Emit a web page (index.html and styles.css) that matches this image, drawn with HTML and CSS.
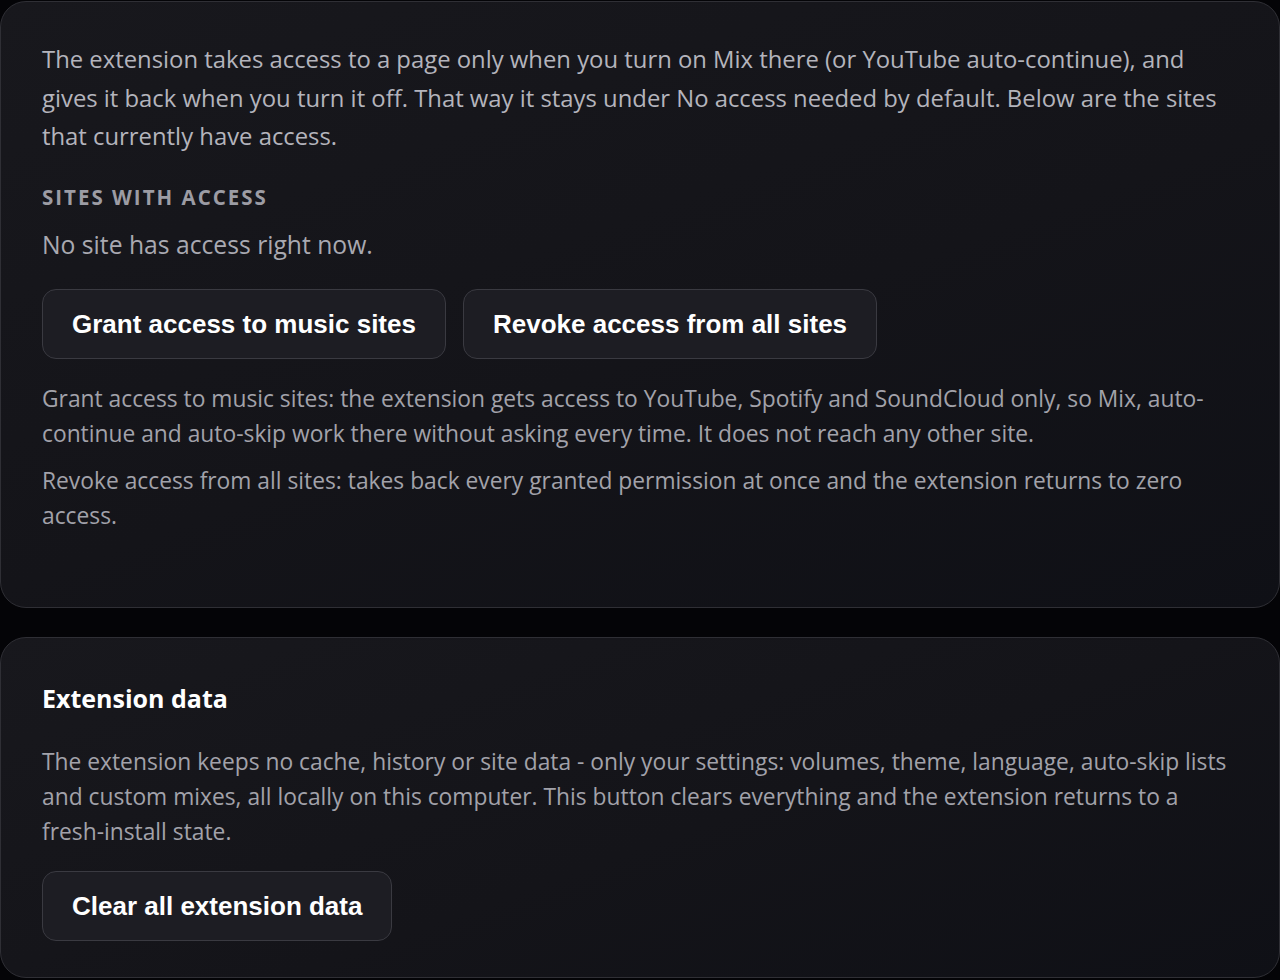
FILE: index.html
```html
<!DOCTYPE html>
<html lang="en">
<head>
<meta charset="utf-8">
<title>Settings</title>
<link rel="stylesheet" href="styles.css">
</head>
<body>
<main class="page">
  <section class="card card-access">
    <p class="lead">The extension takes access to a page only when you turn on Mix there (or YouTube auto-continue), and gives it back when you turn it off. That way it stays under No access needed by default. Below are the sites that currently have access.</p>
    <h3 class="label">SITES WITH ACCESS</h3>
    <p class="empty">No site has access right now.</p>
    <div class="actions">
      <button class="btn">Grant access to music sites</button>
      <button class="btn">Revoke access from all sites</button>
    </div>
    <p class="note">Grant access to music sites: the extension gets access to YouTube, Spotify and SoundCloud only, so Mix, auto-continue and auto-skip work there without asking every time. It does not reach any other site.</p>
    <p class="note">Revoke access from all sites: takes back every granted permission at once and the extension returns to zero access.</p>
  </section>
  <section class="card card-data">
    <h2 class="title">Extension data</h2>
    <p class="note">The extension keeps no cache, history or site data - only your settings: volumes, theme, language, auto-skip lists and custom mixes, all locally on this computer. This button clears everything and the extension returns to a fresh-install state.</p>
    <div class="actions">
      <button class="btn">Clear all extension data</button>
    </div>
  </section>
</main>
</body>
</html>
```

FILE: styles.css
```css
html, body {
  margin: 0;
  padding: 0;
  background: #040407;
}
body {
  font-family: "Open Sans", "Noto Sans", sans-serif;
  color: #b3b3bb;
}
.page {
  display: flex;
  flex-direction: column;
  gap: 29px;
  padding-top: 1px;
}
.card {
  border: 1px solid #2f2f35;
  border-radius: 26px;
  background: linear-gradient(160deg, #18181d 0%, #141419 55%, #0f1016 100%);
  padding: 0 41px;
}
.card-access {
  padding-top: 38px;
  padding-bottom: 74px;
}
.card-data {
  padding-top: 42px;
  padding-bottom: 36px;
}
.lead {
  margin: 0;
  font-size: 23.85px;
  line-height: 38.5px;
  color: #b4b4bc;
}
.label {
  margin: 27px 0 0;
  font-size: 20.5px;
  line-height: 28px;
  font-weight: 700;
  letter-spacing: 2px;
  color: #9c9ca4;
}
.empty {
  margin: 15px 0 0;
  font-size: 24.7px;
  line-height: 38px;
  color: #a9a9b1;
}
.actions {
  display: flex;
  gap: 17px;
  margin-top: 25px;
}
.card-data .actions {
  margin-top: 22px;
}
.btn {
  font-family: "Liberation Sans", Arial, sans-serif;
  font-weight: 700;
  font-size: 26px;
  line-height: 30px;
  color: #ffffff;
  background: #1d1d23;
  border: 1.5px solid #3a3a41;
  border-radius: 14px;
  padding: 19px 29px;
  cursor: pointer;
}
.note {
  margin: 12px 0 0;
  font-size: 22.8px;
  line-height: 35px;
  color: #a2a2aa;
}
.card-access .actions + .note {
  margin-top: 22px;
}
.title {
  margin: 0;
  font-size: 25px;
  line-height: 36px;
  font-weight: 700;
  color: #ffffff;
}
.card-data .note {
  margin-top: 28px;
}
```
